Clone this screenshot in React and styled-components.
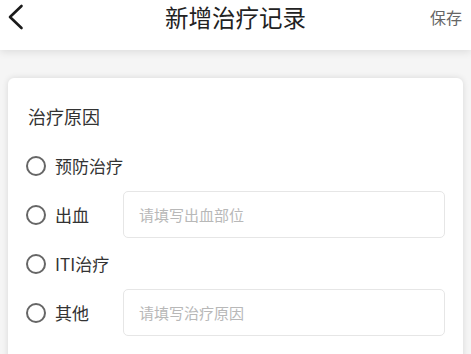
import React from "react";
import styled, { createGlobalStyle } from "styled-components";

const Global = createGlobalStyle`
  html, body { margin: 0; padding: 0; background: #f5f5f5; }
  body { font-family: "Noto Sans CJK SC", "Noto Sans", sans-serif; }
  * { box-sizing: border-box; }
`;

const Page = styled.div`
  width: 471px;
  height: 354px;
  overflow: hidden;
  background: #f5f5f5;
`;

const Header = styled.header`
  position: relative;
  z-index: 1;
  height: 50px;
  padding-bottom: 17px;
  background: #fff;
  display: grid;
  grid-template-columns: 60px 1fr 60px;
  align-items: center;
  box-shadow: 0 2px 8px rgba(0, 0, 0, 0.1);
`;

const Back = styled.button`
  border: 0;
  background: none;
  padding: 0 0 0 6px;
  height: 33px;
  display: flex;
  align-items: center;
  cursor: pointer;
`;

const Title = styled.h1`
  margin: 0;
  text-align: center;
  font-size: 23.5px;
  font-weight: 400;
  color: #222;
  line-height: 32px;
`;

const Save = styled.span`
  text-align: right;
  padding-right: 9px;
  font-size: 16px;
  color: #666;
`;

const Body = styled.main`
  padding: 28px 8px 0;
`;

const Card = styled.section`
  background: #fff;
  border-radius: 6px;
  box-shadow: 0 0 6px rgba(0, 0, 0, 0.12);
  padding: 26px 18px 20px;
  min-height: 300px;
`;

const CardTitle = styled.div`
  font-size: 18px;
  line-height: 24px;
  color: #333;
  margin-bottom: 14px;
  padding-left: 2px;
`;

const Options = styled.div`
  display: flex;
  flex-direction: column;
  gap: 2px;
`;

const Row = styled.label`
  display: flex;
  align-items: center;
  min-height: 47px;
`;

const Radio = styled.span`
  width: 20px;
  height: 20px;
  border-radius: 50%;
  border: 2px solid #666;
  flex: none;
  margin-right: 9px;
`;

const Label = styled.span`
  width: 68px;
  flex: none;
  font-size: 17px;
  color: #333;
  line-height: 24px;
`;

const Input = styled.input`
  flex: 1;
  height: 47px;
  border: 1px solid #e6e6e6;
  border-radius: 5px;
  padding: 0 15px;
  font-family: inherit;
  font-size: 15px;
  color: #333;
  outline: none;
  &::placeholder { color: #b8b8b8; }
`;

const options = [
  { label: "预防治疗" },
  { label: "出血", placeholder: "请填写出血部位" },
  { label: "ITI治疗" },
  { label: "其他", placeholder: "请填写治疗原因" },
];

export default function App() {
  return (
    <Page>
      <Global />
      <Header>
        <Back aria-label="返回">
          <svg width="20" height="28" viewBox="0 0 20 28">
            <polyline points="15.5,3 4,14 15.5,25" fill="none" stroke="#1a1a1a" strokeWidth="2.6" strokeLinecap="round" strokeLinejoin="round" />
          </svg>
        </Back>
        <Title>新增治疗记录</Title>
        <Save>保存</Save>
      </Header>
      <Body>
        <Card>
          <CardTitle>治疗原因</CardTitle>
          <Options>
            {options.map((o) => (
              <Row key={o.label}>
                <Radio />
                <Label>{o.label}</Label>
                {o.placeholder && <Input placeholder={o.placeholder} />}
              </Row>
            ))}
          </Options>
        </Card>
      </Body>
    </Page>
  );
}
